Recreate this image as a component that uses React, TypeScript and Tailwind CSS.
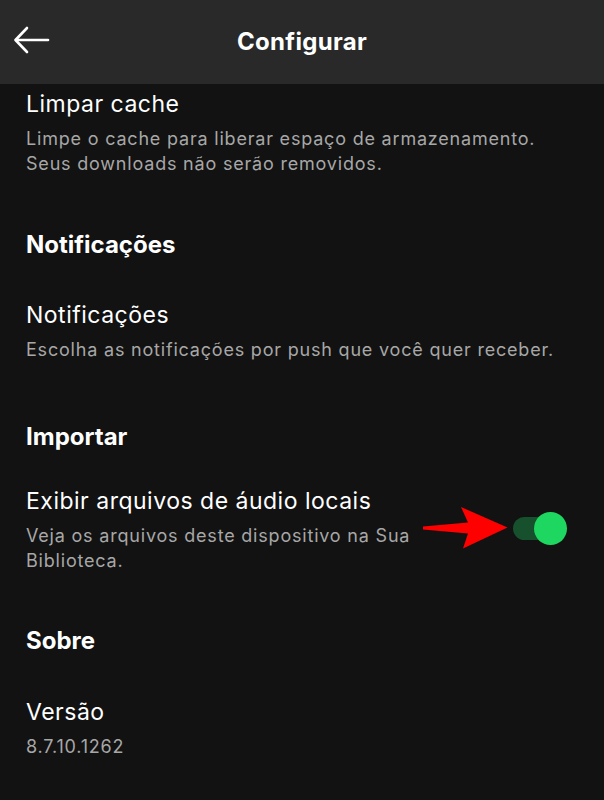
import React from 'react';

const font = { fontFamily: 'Inter, "Noto Sans", sans-serif' };

const Item = ({ title, desc, className = '' }: { title: string; desc?: string; className?: string }) => (
    <div className={className}>
        <div className="text-[23px] leading-[28px] tracking-[0.5px] text-white">{title}</div>
        {desc && <div className="mt-2 text-[18px] leading-[25px] tracking-[0.8px] text-[#a7a7a7]">{desc}</div>}
    </div>
);

const Heading = ({ children, className = '' }: { children: React.ReactNode; className?: string }) => (
    <h2 className={`text-[24px] leading-[30px] font-bold text-white ${className}`}>{children}</h2>
);

export default function App() {
    return (
        <div className="w-[604px] h-[800px] overflow-hidden bg-[#121212]" style={font}>
            <header className="h-[84px] bg-[#292929] flex items-center relative">
                <button className="absolute left-[13px] top-[26px] w-[38px] h-[28px] flex items-center justify-center">
                    <svg width="38" height="28" viewBox="0 0 38 28" fill="none" stroke="white" strokeWidth="2.6" strokeLinecap="round" strokeLinejoin="round">
                        <path d="M35 14H3" />
                        <path d="M14 2L2.5 14L14 26" />
                    </svg>
                </button>
                <h1 className="w-full text-center text-[24px] tracking-[0.3px] font-bold text-white">Configurar</h1>
            </header>

            <div className="px-[26px] pt-[6px]">
                <Item
                    title="Limpar cache"
                    desc="Limpe o cache para liberar espaço de armazenamento. Seus downloads não serão removidos."
                />

                <Heading className="mt-[54px]">Notificações</Heading>
                <Item
                    className="mt-[41px]"
                    title="Notificações"
                    desc="Escolha as notificações por push que você quer receber."
                />

                <Heading className="mt-[60px]">Importar</Heading>
                <div className="mt-[35px] flex items-center relative">
                    <Item
                        className="w-[430px]"
                        title="Exibir arquivos de áudio locais"
                        desc="Veja os arquivos deste dispositivo na Sua Biblioteca."
                    />
                    {/* annotation arrow */}
                    <svg className="absolute left-[397px] top-[20px]" width="90" height="44" viewBox="0 0 90 44">
                        <polygon points="0,19.5 45,15.5 38,0 84.5,20.5 40,41.5 45,26.5 0,22.5" fill="#ff0000" />
                    </svg>
                    <div className="ml-auto mr-[11px] mb-[3px] relative w-[54px] h-[33px] flex items-center">
                        <div className="absolute left-0 w-[46px] h-[23px] rounded-full bg-[#17502c]" />
                        <div className="absolute right-0 w-[33px] h-[33px] rounded-full bg-[#1ed760]" />
                    </div>
                </div>

                <Heading className="mt-[53px]">Sobre</Heading>
                <Item className="mt-[42px]" title="Versão" desc="8.7.10.1262" />
            </div>
        </div>
    );
}
